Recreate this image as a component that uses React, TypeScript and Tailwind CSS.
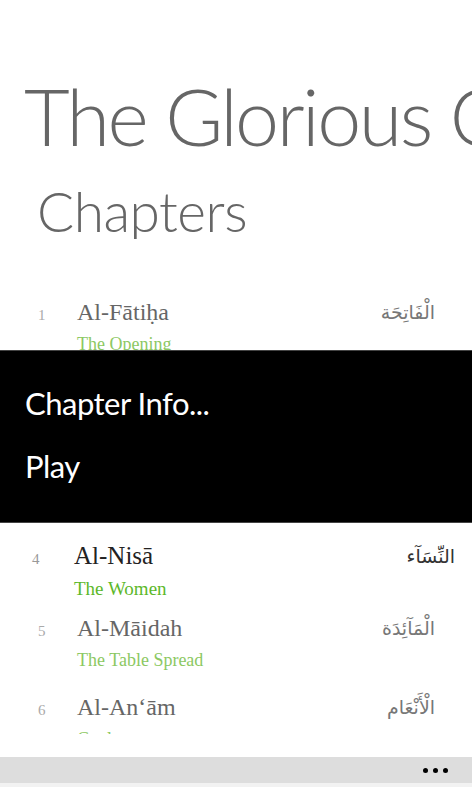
import React from 'react'

type Chapter = {
  n: number
  name: string
  meaning: string
  arabic: string
}

const chapters: Chapter[] = [
  { n: 1, name: 'Al-Fātiḥa', meaning: 'The Opening', arabic: 'الْفَاتِحَة' },
  { n: 2, name: 'Al-Baqarah', meaning: 'The Cow', arabic: 'الْبَقَرَة' },
  { n: 3, name: 'Āl-ʿImrān', meaning: 'The Family of Imran', arabic: 'آلِ عِمْرَان' },
  { n: 4, name: 'Al-Nisā', meaning: 'The Women', arabic: 'النِّسَآء' },
  { n: 5, name: 'Al-Māidah', meaning: 'The Table Spread', arabic: 'الْمَآئِدَة' },
  { n: 6, name: 'Al-An‘ām', meaning: 'Cattle', arabic: 'الْأَنْعَام' },
]

const sans = { fontFamily: 'Lato, "Open Sans", sans-serif' }
const serif = { fontFamily: '"Liberation Serif", "DejaVu Serif", serif' }
const arabicFont = { fontFamily: '"DejaVu Sans", "Noto Sans", sans-serif' }

function ChapterRow({ c, pressed }: { c: Chapter; pressed?: boolean }) {
  return (
    <div
      className={`h-[79px] flex items-start ${
        pressed ? 'pl-[32px] pr-[17px] pt-[7px]' : 'pl-[38px] pr-[37px]'
      }`}
    >
      <div className="flex-1 flex flex-col">
        <div className="flex items-baseline">
          <span
            className={`w-[39px] shrink-0 text-[15px] ${pressed ? 'text-[#999]' : 'text-[#aaa]'}`}
            style={serif}
          >
            {c.n}
          </span>
          <span
            className={`leading-[28px] whitespace-nowrap ${
              pressed ? 'text-[#222] text-[25px] ml-[3px]' : 'text-[#666] text-[24px]'
            }`}
            style={serif}
          >
            {c.name}
          </span>
        </div>
        <div
          className={`pl-[39px] leading-[24px] whitespace-nowrap ${
            pressed ? 'mt-[6px] text-[#5cb82a] text-[19px] ml-[3px]' : 'mt-[5px] text-[#8cc862] text-[18px]'
          }`}
          style={serif}
        >
          {c.meaning}
        </div>
      </div>
      <div
        dir="rtl"
        className={`text-[19px] leading-[28px] whitespace-nowrap ${
          pressed ? 'text-[#333]' : 'text-[#777]'
        }`}
        style={arabicFont}
      >
        {c.arabic}
      </div>
    </div>
  )
}

export default function App() {
  return (
    <div className="relative w-[472px] h-[787px] bg-white overflow-hidden flex flex-col">
      {/* Header */}
      <div className="pt-[76px] whitespace-nowrap overflow-hidden" style={sans}>
        <div className="pl-[24px] text-[79px] leading-[79px] font-light tracking-[-2.5px] text-[#666]">
          The Glorious Qur&apos;an
        </div>
        <div className="mt-[29px] pl-[37px] text-[55px] leading-[55px] font-light tracking-[-0.5px] text-[#666]">
          Chapters
        </div>
      </div>

      {/* Chapter list */}
      <div className="mt-[59px] h-[436px] overflow-hidden">
        {chapters.map((c) => (
          <ChapterRow key={c.n} c={c} pressed={c.n === 4} />
        ))}
      </div>

      <div className="flex-1" />

      {/* App bar */}
      <div className="h-[26px] bg-[#dddddd] flex items-center justify-end pr-[24px] gap-[5px]">
        <span className="w-[5px] h-[5px] rounded-full bg-black" />
        <span className="w-[5px] h-[5px] rounded-full bg-black" />
        <span className="w-[5px] h-[5px] rounded-full bg-black" />
      </div>
      <div className="h-[4px] bg-[#f2f2f2]" />

      {/* Context menu */}
      <div
        className="absolute left-0 right-0 top-[350px] h-[173px] bg-black border-y border-[#444] pt-[21px] pl-[25px] text-white"
        style={sans}
      >
        <div className="text-[31px] leading-[63px] tracking-[-0.5px]">Chapter Info...</div>
        <div className="text-[31px] leading-[63px] tracking-[-0.5px]">Play</div>
      </div>
    </div>
  )
}
